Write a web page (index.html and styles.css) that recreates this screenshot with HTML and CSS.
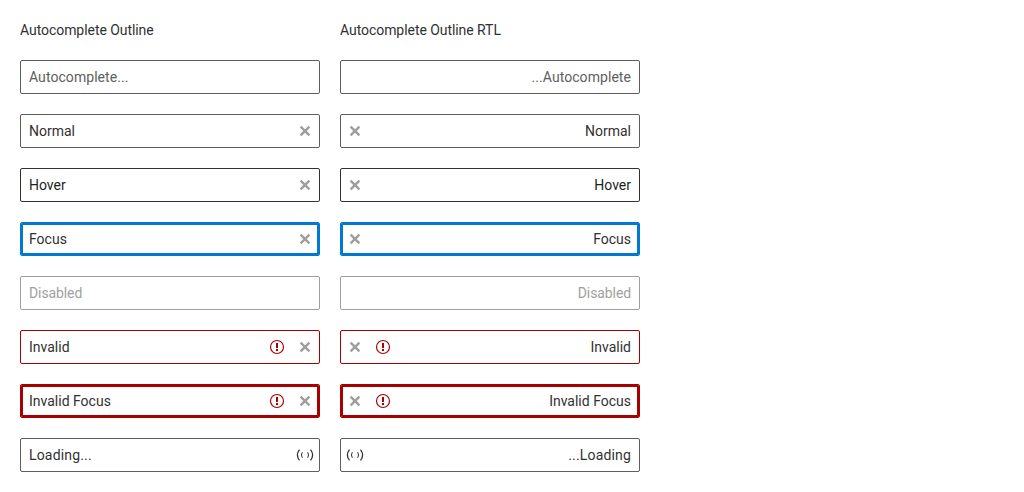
FILE: index.html
```
<!DOCTYPE html>
<html lang="en">
<head>
<meta charset="utf-8">
<title>Autocomplete Outline</title>
<link rel="stylesheet" href="styles.css">
</head>
<body>
<svg class="defs" aria-hidden="true">
  <symbol id="x" viewBox="0 0 16 16"><path d="M3.6 3.6l8.8 8.8M12.4 3.6l-8.8 8.8" fill="none" stroke="currentColor" stroke-width="2.5"/></symbol>
  <symbol id="warn" viewBox="0 0 16 16"><circle cx="8" cy="8" r="6.5" fill="none" stroke="currentColor" stroke-width="1.15"/><path d="M7 4h2v5H7zM7 10h2v2H7z" fill="currentColor"/></symbol>
  <symbol id="load" viewBox="0 0 18 16"><path d="M3.5 2.6Q-.7 8 3.5 13.4M14.5 2.6Q18.7 8 14.5 13.4" fill="none" stroke="currentColor" stroke-width="1.25"/><path d="M6.3 5.2Q4.6 8 6.3 10.8M11.7 5.2Q13.4 8 11.7 10.8" fill="none" stroke="currentColor"/></symbol>
</svg>
<main class="grid">
  <section class="column">
    <h1 class="title">Autocomplete Outline</h1>
    <div class="field placeholder"><span class="text">Autocomplete...</span></div>
    <div class="field"><span class="text">Normal</span><svg class="icon clear"><use href="#x"/></svg></div>
    <div class="field hover"><span class="text">Hover</span><svg class="icon clear"><use href="#x"/></svg></div>
    <div class="field focus"><span class="text">Focus</span><svg class="icon clear"><use href="#x"/></svg></div>
    <div class="field disabled"><span class="text">Disabled</span></div>
    <div class="field invalid"><span class="text">Invalid</span><svg class="icon warning"><use href="#warn"/></svg><svg class="icon clear"><use href="#x"/></svg></div>
    <div class="field invalid focus"><span class="text">Invalid Focus</span><svg class="icon warning"><use href="#warn"/></svg><svg class="icon clear"><use href="#x"/></svg></div>
    <div class="field busy"><span class="text">Loading...</span><svg class="icon loading"><use href="#load"/></svg></div>
  </section>
  <section class="column">
    <h1 class="title">Autocomplete Outline RTL</h1>
    <div class="field placeholder" dir="rtl"><span class="text">Autocomplete...</span></div>
    <div class="field" dir="rtl"><span class="text">Normal</span><svg class="icon clear"><use href="#x"/></svg></div>
    <div class="field hover" dir="rtl"><span class="text">Hover</span><svg class="icon clear"><use href="#x"/></svg></div>
    <div class="field focus" dir="rtl"><span class="text">Focus</span><svg class="icon clear"><use href="#x"/></svg></div>
    <div class="field disabled" dir="rtl"><span class="text">Disabled</span></div>
    <div class="field invalid" dir="rtl"><span class="text">Invalid</span><svg class="icon warning"><use href="#warn"/></svg><svg class="icon clear"><use href="#x"/></svg></div>
    <div class="field invalid focus" dir="rtl"><span class="text">Invalid Focus</span><svg class="icon warning"><use href="#warn"/></svg><svg class="icon clear"><use href="#x"/></svg></div>
    <div class="field busy" dir="rtl"><span class="text">Loading...</span><svg class="icon loading"><use href="#load"/></svg></div>
  </section>
</main>
</body>
</html>
```
FILE: styles.css
```
* { box-sizing: border-box; }
body {
  margin: 0;
  background: #fff;
  color: #323130;
  font: 14px/20px Roboto, sans-serif;
}
.defs { display: none; }
.grid {
  display: grid;
  grid-template-columns: 300px 300px;
  gap: 20px;
  padding: 20px;
}
.column {
  display: flex;
  flex-direction: column;
  gap: 20px;
}
.title {
  margin: 0;
  font-size: 14px;
  font-weight: 400;
  line-height: 20px;
  letter-spacing: -0.06px;
}
.field {
  display: flex;
  align-items: center;
  height: 34px;
  padding: 0 8px;
  padding-inline-end: 6px;
  border: 1px solid #605e5c;
  border-radius: 2px;
}
.text { flex: 1; }
.icon {
  width: 16px;
  height: 16px;
  flex: none;
}
.clear { color: #a19f9d; }
.warning {
  color: #a80000;
  margin-inline-end: 12px;
}
.loading {
  width: 18px;
  margin-inline-end: -1px;
}
.placeholder {
  color: #605e5c;
  letter-spacing: 0.06px;
}
.hover {
  border-color: #323130;
  color: #201f1e;
}
.focus {
  border-color: #0078d4;
  box-shadow: inset 0 0 0 2px #0078d4;
}
.disabled {
  border-color: #a19f9d;
  color: #a19f9d;
  letter-spacing: -0.1px;
}
.busy { letter-spacing: 0.17px; }
.invalid { border-color: #a80000; }
.invalid.focus { box-shadow: inset 0 0 0 2px #a80000; }
```
